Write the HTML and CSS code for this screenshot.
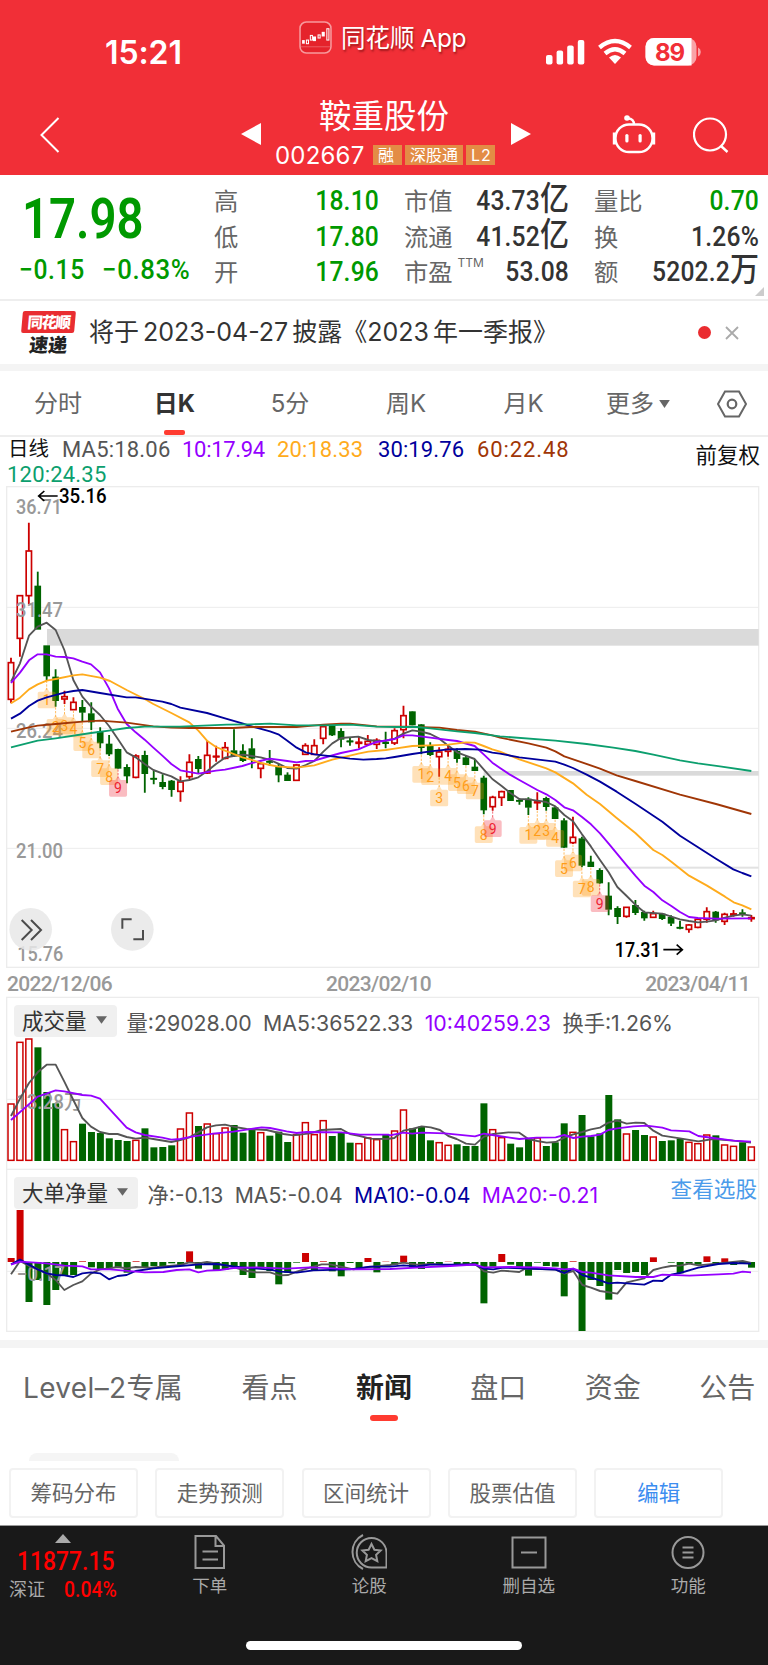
FILE: index.html
```html
<!DOCTYPE html>
<html lang="zh-CN">
<head>
<meta charset="utf-8">
<title>鞍重股份 002667</title>
<link rel="stylesheet" href="styles.css">
</head>
<body>
<header class="top">
  <div class="status">
    <span class="clock">15:21</span>
    <div class="brand">
      <svg class="brand-icon" viewBox="0 0 32 32"><rect x="1" y="1" width="30" height="30" rx="6" fill="#e5232b" stroke="#f79a9d" stroke-width="1.5"/><path d="M2 25h28" stroke="#ee6a6f" stroke-width=".8"/><g fill="#fff"><rect x="3" y="18.500" width="2.600" height="3.500"/><rect x="13.500" y="15" width="3" height="4.500"/><rect x="22" y="10.500" width="3" height="4.500"/></g><g fill="none" stroke="#fff"><rect x="7.200" y="18.500" width="2" height="3.500"/><rect x="11" y="14" width="2" height="4.500"/><rect x="18.500" y="13.500" width="2" height="3"/><rect x="27" y="7.500" width="2" height="11"/></g></svg>
      <span class="brand-name">同花顺<i>App</i></span>
    </div>
    <svg class="signals" viewBox="0 0 156 28"><g fill="#fff"><rect x="0" y="17" width="6.500" height="9.500" rx="2"/><rect x="10.600" y="12.500" width="6.500" height="14" rx="2"/><rect x="21.200" y="7.500" width="6.500" height="19" rx="2"/><rect x="31.800" y="2" width="6.500" height="24.500" rx="2"/></g>
      <g fill="none" stroke="#fff" stroke-width="4.300"><path d="M53.500 9.500Q69 -3.500 84.500 9.500"/><path d="M59 15.500Q69 7 79 15.500"/></g><path d="M63 19.500Q69 14.500 75 19.500L69 26z" fill="#fff"/>
      <rect x="99.500" y="0" width="51" height="27.500" rx="8.500" fill="#f9a3a7"/><path d="M108 0h37.500v27.500H108a8.500 8.500 0 0 1-8.500-8.500V8.500A8.500 8.500 0 0 1 108 0z" fill="#fff"/><path d="M152 9.500a5 5 0 0 1 0 9z" fill="#f9a3a7"/><text class="battery" x="124" y="22.500" text-anchor="middle" textLength="30">89</text></svg>
  </div>
  <nav class="nav">
    <svg class="back" viewBox="0 0 20 36"><path d="M18.500 1L1.500 18 18.500 35" fill="none" stroke="#fff" stroke-width="2"/></svg>
    <svg class="tri" viewBox="0 0 20 22"><path d="M0 11L20 0v22z" fill="#fff"/></svg>
    <div class="stock">
      <h1>鞍重股份</h1>
      <div class="code"><span>002667</span><b>融</b><b>深股通</b><b class="l2">L2</b></div>
    </div>
    <svg class="tri" viewBox="0 0 20 22"><path d="M20 11L0 0v22z" fill="#fff"/></svg>
    <svg class="robot" viewBox="0 0 44 40"><g fill="none" stroke="#fff" stroke-width="2.400"><rect x="3.500" y="10.500" width="37" height="27.500" rx="13.500"/><path d="M22 10.500c0-4-2-6-6-6"/><path d="M2.300 18.500v12M41.700 18.500v12" stroke-width="3"/></g><circle cx="15" cy="4" r="2.800" fill="#fff"/><rect x="13.300" y="20" width="3.200" height="8.500" rx="1.600" fill="#fff"/><rect x="26.500" y="20" width="3.200" height="8.500" rx="1.600" fill="#fff"/></svg>
    <svg class="search" viewBox="0 0 36 36"><circle cx="17" cy="17.500" r="16" fill="none" stroke="#fff" stroke-width="2.200"/><path d="M28 29l6.500 6" stroke="#fff" stroke-width="2.400"/></svg>
  </nav>
</header>

<section class="quote">
  <div class="price">
    <div class="last"><span class="din">17.98</span></div>
    <div class="chg"><span class="din">−0.15</span><span class="din pct">−0.83%</span></div>
  </div>
  <dl class="c1"><dt>高</dt><dd class="down din">18.10</dd><dt>低</dt><dd class="down din">17.80</dd><dt>开</dt><dd class="down din">17.96</dd></dl>
  <dl class="c2"><dt>市值</dt><dd class="din">43.73<em>亿</em></dd><dt>流通</dt><dd class="din">41.52<em>亿</em></dd><dt class="pe">市盈<sup>TTM</sup></dt><dd class="din">53.08</dd></dl>
  <dl class="c3"><dt>量比</dt><dd class="down din">0.70</dd><dt>换</dt><dd class="din">1.26%</dd><dt>额</dt><dd class="din">5202.2<em>万</em></dd></dl>
  <svg class="corner" viewBox="0 0 9 9"><path d="M9 0v9H0z" fill="#ccc"/></svg>
</section>

<section class="notice">
  <div class="logo"><b>同花顺</b><i>速递</i></div>
  <p>将于<span>2023-04-27</span>披露《<span class="year">2023</span>年一季报》</p>
  <span class="dot"></span>
  <svg class="close" viewBox="0 0 14 14"><path d="M1 1l12 12M13 1L1 13" stroke="#aaa" stroke-width="1.800"/></svg>
</section>

<nav class="periods">
  <span>分时</span><span class="on">日K</span><span>5分</span><span>周K</span><span>月K</span><span class="more">更多<svg viewBox="0 0 12 9"><path d="M0 0h12L6 9z" fill="#666"/></svg></span>
  <svg class="hex" viewBox="0 0 30 28"><path d="M8 1.500h14l7 12.500-7 12.500H8L1 14z" fill="none" stroke="#666" stroke-width="2"/><circle cx="15" cy="14" r="4.300" fill="none" stroke="#666" stroke-width="2.200"/></svg>
</nav>

<section class="kline">
  <div class="ma">
    <div class="ma-list"><span class="day">日线</span><span class="m5">MA5:18.06</span><span class="m10">10:17.94</span><span class="m20">20:18.33</span><span class="m30">30:19.76</span><span class="m60">60:22.48</span><span class="m120">120:24.35</span></div>
    <span class="adj">前复权</span>
  </div>
  <svg id="candles" class="plot" width="768" height="490" viewBox="0 0 2304 1470"></svg>
  <div class="dates"><span>2022/12/06</span><span>2023/02/10</span><span>2023/04/11</span></div>
</section>

<section class="panel volume">
  <div class="legend"><button>成交量<svg viewBox="0 0 12 8"><path d="M0 0h12L6 8z" fill="#666"/></svg></button><span>量:29028.00</span><span>MA5:36522.33</span><span class="m10">10:40259.23</span><span>换手:1.26%</span></div>
  <svg id="volume" class="plot" width="768" height="133" viewBox="0 471 2304 399"></svg>
</section>
<section class="panel orders">
  <div class="legend"><button>大单净量<svg viewBox="0 0 12 8"><path d="M0 0h12L6 8z" fill="#666"/></svg></button><span>净:-0.13</span><span>MA5:-0.04</span><span class="m30">MA10:-0.04</span><span class="m10">MA20:-0.21</span><a>查看选股</a></div>
  <svg id="orders" class="plot" width="768" height="123" viewBox="0 132 2304 369"></svg>
</section>

<nav class="news"><span>Level–2专属</span><span>看点</span><span class="on">新闻</span><span>盘口</span><span>资金</span><span>公告</span></nav>
<div class="stub"></div>
<div class="tools"><span>筹码分布</span><span>走势预测</span><span>区间统计</span><span>股票估值</span><span class="edit">编辑</span></div>

<footer>
  <div class="bar">
    <div class="index"><svg viewBox="0 0 16 9"><path d="M8 0l8 9H0z" fill="#aaa"/></svg><strong class="din">11877.15</strong><div><span>深证</span><em class="din">0.04%</em></div></div>
    <div class="act"><svg viewBox="0 0 36 36"><path d="M3.500 2h20.500l8 9.500v22.500H3.500zM23.500 2v10h8.500M10.500 17.500h15.500M10.500 25.500h15.500"/></svg>下单</div>
    <div class="act"><svg viewBox="0 0 36 36"><path d="M20.500 4a15 15 0 0 1 15 15v14.500H20.500a14.700 14.700 0 0 1 0-29.500zM12 1a19 19 0 0 0 0 34"/><path d="M20.500 10l2.900 5.700 6.300.8-4.600 4.400 1.200 6.300-5.800-3-5.800 3 1.200-6.300-4.600-4.400 6.300-.8z"/></svg>论股</div>
    <div class="act"><svg viewBox="0 0 36 36"><rect x="1.500" y="3.500" width="33" height="30"/><path d="M10 18.500h16"/></svg>删自选</div>
    <div class="act"><svg viewBox="0 0 36 36"><circle cx="18" cy="18.500" r="15.500"/><path d="M12.500 13.500h11M12.500 18.500h11M12.500 23.500h11"/></svg>功能</div>
  </div>
  <div class="home"></div>
</footer>
<script src="charts.js"></script>
</body>
</html>
```
FILE: styles.css
```css
* { box-sizing: border-box; }
body { margin: 0; width: 768px; height: 1665px; overflow: hidden; background: #fff; color: #333; font-family: Inter, "Noto Sans CJK SC", sans-serif; }
svg { display: block; flex: none; }
i, em { font-style: normal; }
span, b { white-space: nowrap; }
.din { font-family: Roboto, "Noto Sans CJK SC", sans-serif; font-weight: 500; display: inline-block; transform: scaleX(.88); transform-origin: left; white-space: nowrap; }

.top { height: 175px; background: #f12f37; color: #fff; }
.status { height: 88px; display: flex; padding-left: 105px; }
.clock { width: 194px; padding-top: 32px; font-size: 32px; line-height: 42px; font-weight: 600; letter-spacing: -.1px; }
.brand { width: 247px; display: flex; padding-top: 21px; }
.brand-icon { width: 33px; height: 33px; }
.brand-name { margin-left: 9px; font-size: 24.5px; line-height: 35px; text-shadow: 1px 2px 2px rgba(80, 0, 0, .5); }
.brand-name i { margin-left: 6px; letter-spacing: -.5px; }
.signals { width: 156px; height: 28px; margin-top: 38px; }
.battery { font: 700 24px Inter, sans-serif; fill: #f12f37; }
.nav { height: 87px; display: flex; padding-left: 40px; }
.back { width: 20px; height: 36px; margin: 29px 181px 0 0; }
.tri { width: 20px; height: 22px; margin-top: 35px; }
.stock { width: 250px; padding-left: 14px; }
.stock h1 { margin: 7px 0 0 44px; font-size: 32.5px; line-height: 44px; font-weight: 400; }
.code { display: flex; align-items: center; gap: 3px; height: 24px; margin-top: 4px; }
.code span { width: 95px; font-size: 24px; letter-spacing: .2px; }
.code b { height: 20px; padding: 0 5px; font-size: 16px; line-height: 20px; font-weight: 400; background: #e38c45; width: 29px; letter-spacing: 1px; }
.code b:nth-child(3) { width: 58px; letter-spacing: 0; }
.robot { width: 44px; height: 40px; margin: 26px 0 0 81px; }
.search { width: 36px; height: 36px; margin: 29px 0 0 37px; }

.quote { height: 126px; border-bottom: 2px solid #eee; display: flex; position: relative; color: #333; }
.price { width: 214px; color: #090; }
.last { height: 73px; padding: 13px 0 0 22px; font-size: 55px; line-height: 60px; }
.last .din { font-weight: 600; transform: scaleX(.86); }
.chg { padding-left: 19px; font-size: 28px; line-height: 43px; display: flex; letter-spacing: .7px; }
.chg .pct { margin-left: 8px; transform: scaleX(.92); }
.quote dl { flex: none; margin: 0; display: grid; grid-template-columns: 24px 1fr; grid-template-rows: repeat(3, 35.6px); padding-top: 8px; line-height: 35.6px; }
.quote dt { font-size: 24.300px; color: #666; white-space: nowrap; padding-top: 1px; }
.quote dd { margin: 0; text-align: right; font-size: 28px; transform-origin: right; letter-spacing: .2px; }
.quote dd em { font-size: 33px; font-weight: 500; line-height: 30px; letter-spacing: 0; }
.quote .down { color: #090; }
.c1 { width: 165px; }
.c2 { width: 165px; margin-left: 25px !important; }
.c3 { width: 165px; margin-left: 25px !important; }
.pe { width: 60px; }
.pe sup { position: absolute; margin-left: 5px; font-size: 12px; line-height: 16px; }
.corner { position: absolute; right: 4px; bottom: 3px; width: 9px; height: 9px; }

.notice { height: 70px; border-bottom: 7px solid #f4f4f4; display: flex; align-items: center; padding-left: 22px; }
.logo { width: 53px; margin-right: 14px; text-align: center; font-family: "Noto Sans CJK SC", sans-serif; }
.logo b { display: block; height: 22px; font-size: 15.500px; line-height: 21px; font-weight: 900; letter-spacing: -1.5px; color: #fff; background: #e92d31; border-radius: 2px; transform: skewX(-5deg); }
.logo i { display: block; height: 21px; font-size: 19px; line-height: 21px; font-weight: 900; color: #222; transform: skewX(-6deg); }
.notice p { width: 609px; margin: 0; padding-bottom: 2px; font-size: 25px; line-height: 36px; white-space: nowrap; color: #333; }
.notice p span { margin: 0 4px; letter-spacing: 0; }
.notice p .year { margin-left: 0; }
.dot { width: 13px; height: 13px; border-radius: 50%; background: #ea2c30; }
.close { width: 14px; height: 14px; margin-left: 14px; }

.periods { height: 66px; border-bottom: 2px solid #eee; display: grid; grid-template-columns: 116px 117px 114px 118px 117px 112px 30px; align-items: center; justify-items: center; padding-top: 1px; font-size: 24px; line-height: 64px; color: #666; }
.periods span { position: relative; }
.periods .on { font-weight: 700; color: #333; }
.periods .on::after { content: ""; position: absolute; left: 50%; margin-left: -10px; bottom: 1px; width: 21px; height: 5px; border-radius: 2px; background: #ff3b30; }
.more { display: flex; align-items: center; gap: 5px; }
.more svg { width: 11px; height: 8px; }
.hex { width: 30px; height: 28px; justify-self: start; margin-left: 23px; }

.ma { height: 43px; display: flex; justify-content: space-between; font-family: Roboto, "Noto Sans CJK SC", sans-serif; font-size: 22px; line-height: 25px; }
.ma-list { display: grid; grid-template-columns: 55px 120px 95px 101px 99px 110px; grid-template-rows: 25px 25px; padding-left: 7px; color: #555; }
.day, .adj { font-size: 20.500px; color: #111; }
.day { padding-left: 1px; }
.adj { font-size: 21.500px; line-height: 38px; padding-right: 8px; }
.m120 { grid-column: 1 / 3; color: #0c9f6e; letter-spacing: .2px; }
.m5 { letter-spacing: .2px; }
.m10 { color: #9500ff; }
.m20 { color: #ffab1c; }
.m30 { color: #00009c; }
.m60 { color: #a03606; }
.ma-list .m20, .ma-list .m30 { letter-spacing: .1px; }
.ma-list .m60 { letter-spacing: .9px; }
.ma-list .m10 { letter-spacing: -.3px; }
.plot { overflow: visible; }
.plot text { font-family: Roboto, "Noto Sans CJK SC", sans-serif; }
.dates { height: 27px; display: flex; justify-content: space-between; padding: 0 18px 0 7px; font: 500 21px/28px Roboto, sans-serif; letter-spacing: -.7px; color: #999; }

.panel { margin: 0; }
.volume { height: 172px; }
.orders { height: 171px; }
.legend { height: 40px; display: flex; align-items: center; padding: 7px 0 0 14px; font-size: 21.300px; line-height: 30px; color: #555; }
.legend button { width: 103px; height: 32px; border: 0; border-radius: 4px; padding: 0 0 2px 8px; display: flex; align-items: center; gap: 9px; background: #f0f0f0; font: 21.500px/30px "Noto Sans CJK SC", sans-serif; color: #333; white-space: nowrap; }
.legend button svg { width: 11px; height: 8px; }
.legend span { margin-left: 11.400px; padding-top: 5px; }
.legend button + span { margin-left: 9.500px; }
.legend .m10 { color: #9500ff; }
.legend .m30 { color: #00009c; }
.orders button { width: 124px; }
.orders .legend { font-size: 21.200px; }
.orders a { margin: -8px 11px 0 auto; font-size: 21.600px; color: #4b9bea; }

.news { height: 113px; border-top: 8px solid #f4f4f4; display: flex; align-items: flex-start; padding-left: 23px; font-size: 28px; line-height: 80px; color: #666; }
.news span { position: relative; margin-right: 58.400px; }
.news span:first-child { letter-spacing: .35px; }
.news .on { font-weight: 700; color: #222; }
.news .on::after { content: ""; position: absolute; left: 14px; top: 67px; width: 28px; height: 6px; border-radius: 3px; background: #ff3b30; }
.stub { height: 8px; width: 150px; margin-left: 29px; border-radius: 8px 8px 0 0; background: #f5f5f5; }
.tools { display: flex; gap: 17.300px; padding: 7px 9px; height: 64px; }
.tools span { width: 129px; height: 50px; border: 2px solid #f2f2f2; border-radius: 4px; text-align: center; font-size: 21.500px; line-height: 46px; color: #666; }
.tools .edit { color: #3c8df0; }

footer { height: 140px; background: #191919; border-top: 1px solid #999; color: #aaa; }
.bar { display: flex; height: 115px; padding-top: 8px; }
.index { width: 130px; padding-left: 9px; }
.index svg { width: 16px; height: 9px; margin-left: 46px; }
.index strong { display: block; margin: 4px 0 0 8px; font-size: 26px; line-height: 28px; font-weight: 500; color: #f00; }
.index div { display: flex; gap: 19px; font-size: 18px; line-height: 30px; }
.index em { font-size: 22px; color: #f00; }
.act { width: 159.500px; display: flex; flex-direction: column; align-items: center; font-size: 17.500px; line-height: 26px; }
.act svg { width: 36px; height: 36px; margin-bottom: 3px; fill: none; stroke: #999; stroke-width: 2; }
.home { width: 276px; height: 9px; margin: 0 auto; border-radius: 5px; background: #fff; }
```
FILE: charts.js
```js
// Plots are drawn in units of one third of a pixel.
var FIRST = 33, STEP = 26.76;
var RED = '#cc0000', GREEN = '#006400';
var COLORS = { ma5: '#555555', ma10: '#9500ff', ma20: '#ffab1c', ma30: '#00009c', ma60: '#a03606', ma120: '#0c9f6e' };

function xAt(i) { return FIRST + STEP * i; }
function rect(x, y, w, h, attrs) { return '<rect x="' + x + '" y="' + y + '" width="' + w + '" height="' + h + '" ' + attrs + '/>'; }
function hline(y) { return '<path d="M20 ' + y + 'H2276" stroke="#ececec" stroke-width="3"/>'; }
function label(x, y, w, s, color, weight, size) {
  return '<text x="' + x + '" y="' + y + '" textLength="' + w + '" lengthAdjust="spacingAndGlyphs" fill="' + color + '" font-weight="' + weight + '" font-size="' + (size || 62) + '">' + s + '</text>';
}
// parts: [dx, dy, "x,y x,y ..."] segments joined into one polyline
function line(color, parts) {
  var pts = [];
  parts.forEach(function (p) {
    p[2].split(' ').forEach(function (s) {
      var c = s.split(',');
      pts.push((+c[0] + p[0]) + ',' + (+c[1] + p[1]));
    });
  });
  return '<polyline points="' + pts.join(' ') + '" fill="none" stroke="' + color + '" stroke-width="5.6" stroke-linejoin="round"/>';
}

// Each candle: colour high bodyTop bodyBottom low
function candleRows(dy, text) {
  return text.split('|').map(function (r) {
    var a = r.split(' ');
    return { up: a[0] === 'r', v: a.slice(1).map(function (n) { return +n + dy; }) };
  });
}
var candles = candleRows(0, 'r 533 548 658 670|r 345 347 475 530|r 128 213 347 372|g 275 318 448 448|g 497 497 588 600|g 568 591 662 680|r 632 650 657 672|r 652 667 689 690|g 660 682 697 725|g 667 701 726 750|g 742 755 789 805|g 765 792 822 828|g 806 808 865 866|g 853 862 888 910|r 823 828 892 895|g 812 826 881 938|g 872 895 898 913|g 883 907 920 928|g 900 903 929 950|r 889 906 934 965|r 823 847 890 898|g 828 838 866 882|r 782 826 879 882|r 797 829 830 845|r 786 803 835 838|g 748 812 828 830|g 793 813 842 846')
  .concat(candleRows(540, 'g 235 266 295 325|r 305 311 325 355|g 270 304 307 318|g 312 320 345 367|g 337 345 362 362|r 313 315 361 362|r 250 257 283 285|r 238 257 283 285|r 198 200 235 253|g 195 197 225 228|g 205 214 238 262|g 232 243 246 257|r 230 247 250 265|r 225 244 253 257|r 235 241 253 267|g 215 246 251 265|r 205 212 249 255|r 137 167 209 235|g 154 155 195 196|g 192 194 263 283|g 247 258 284 288|r 262 276 290 350|r 255 268 274 290|g 265 274 296 308|g 288 293 314 316|g 297 321 332 333|g 347 354 450 463|r 407 412 440 452'))
  .concat(candleRows(600, 'r 332 335 352 378|g 331 331 362 362|g 355 361 364 374|g 352 357 382 405|r 337 366 368 390|g 350 355 380 392|g 378 383 416 417|g 415 422 502 504|r 410 472 488 492|g 470 476 556 562|g 527 546 560 561|g 565 571 609 611|g 607 648 688 706|g 679 685 710 732|r 681 682 709 713|g 660 676 698 705|g 692 697 714 722|r 692 701 712 714|g 700 702 716 720|g 706 712 730 738|g 722 742 745 748|r 732 735 748 758|r 716 718 742 745|r 682 695 718 728|g 693 696 720 728|r 698 703 724 735|r 690 702 705 710|g 688 698 702 710|r 705 713 716 725'));

function drawCandles() {
  var s = rect(20, 20, 2256, 1442, 'fill="none" stroke="#ececec" stroke-width="4"');
  s += hline(382) + hline(745) + hline(1105);
  s += rect(141, 447, 2135, 50, 'fill="#dadada"') + rect(1451, 873, 825, 14, 'fill="#dadada"') + rect(1800, 1160, 476, 6, 'fill="#e2e2e2"');
  candles.forEach(function (c, i) {
    var x = xAt(i), v = c.v, col = c.up ? RED : GREEN;
    s += '<path d="M' + x + ' ' + v[0] + 'V' + v[1] + 'M' + x + ' ' + v[2] + 'V' + v[3] + '" stroke="' + col + '" stroke-width="5.5"/>';
    s += c.up ? rect(x - 8, v[1], 16, Math.max(1, v[2] - v[1]), 'fill="#fff" stroke="' + col + '" stroke-width="5"')
              : rect(x - 10, v[1] - 1, 20, v[2] - v[1] + 2, 'fill="' + col + '"');
    // A candle that opens and closes at one price is a cross
    if (v[2] - v[1] < 4) s += '<path d="M' + (x - 10) + ' ' + (v[1] + 1) + 'h20" stroke="' + col + '" stroke-width="5"/>';
  });
  s += label(48, 101, 138, '36.71', '#999', 500) + label(48, 410, 141, '31.47', '#999', 500) + label(48, 773, 141, '26.24', '#999', 500) + label(48, 1134, 141, '21.00', '#999', 500);
  // Sequence markers under the candles: [first candle, centre heights]
  [[4, [660, 742, 737, 747, 788, 810, 866, 890, 925]],
   [46, [883, 890, 954, 889, 908, 917, 933, 1064, 1046]],
   [58, [1066, 1054, 1054, 1075, 1166, 1149, 1227, 1222, 1271]]].forEach(function (run) {
    run[1].forEach(function (y, k) {
      var x = xAt(run[0] + k), last = k === 8;
      var ink = last ? '#ee2233' : '#ff9d18';
      s += '<path d="M' + x + ' ' + (candles[run[0] + k].v[3] + 2) + 'V' + (y - 30) + '" stroke="' + ink + '" stroke-width="2" stroke-dasharray="7 4"/>';
      s += '<path d="M' + (x - 22) + ' ' + (y - 25) + 'h14l8 -13 8 13h14q5 0 5 5v40q0 5 -5 5h-44q-5 0 -5 -5v-40q0 -5 5 -5z" fill="' + ink + '" fill-opacity=".3"/>';
      s += '<text x="' + x + '" y="' + (y + 15) + '" text-anchor="middle" font-size="42" fill="' + ink + '">' + (k + 1) + '</text>';
    });
  });
  s += line(COLORS.ma5, [[0, 0, '33,605 60,550 87,467 113,440 140,428 167,450 193,510 220,600 247,650 273,680 300,705 327,738 353,776 380,817 407,832 434,852 460,870 487,880 514,889 541,904 568,900 595,892 621,874 648,852 675,833 700,828 730,824'], [750, 540, '5,288 32,292 60,300 85,311 112,324 140,326 167,315 193,303 220,275 247,250 273,234 325,230 355,240 380,243 407,242 434,236 460,221 487,211 514,215 541,222 568,236 595,257 621,277 647,287 674,297 701,328 727,357'], [1500, 600, '5,318 30,338 58,357 85,358 112,362 139,366 166,379 193,405 219,424 246,463 273,500 300,540 326,577 352,621 380,648 406,674 433,697 487,701 514,710 540,718 567,723 594,727 621,725 648,721 675,713 701,707 727,703 754,707']]);
  s += line(COLORS.ma10, [[0, 0, '33,609 60,578 87,541 113,523 140,523 167,530 193,531 220,535 247,545 273,553 300,577 327,625 353,686 380,732 407,757 434,779 460,803 487,827 514,852 541,871 595,881 648,872 675,869 727,858'], [750, 540, '0,311 30,303 60,296 112,303 140,307 167,303 193,302 230,291 273,279 325,268 360,253 380,246 434,237 460,226 487,226 541,233 595,240 621,243 674,258 701,283 727,308'], [1500, 600, '0,264 30,284 58,300 112,330 139,343 166,360 193,382 219,391 246,411 273,433 300,460 326,491 380,556 406,587 433,617 460,636 487,661 514,678 540,696 567,711 594,714 648,716 754,715']]);
  s += line(COLORS.ma20, [[0, 0, '33,670 60,653 87,628 113,613 140,602 167,597 220,586 247,583 300,593 330,603 380,630 434,657 460,672 514,699 568,727 595,752 621,782 648,801 675,812 727,832'], [750, 540, '0,298 30,308 60,315 85,320 140,323 193,316 247,299 300,287 325,281 355,275 407,270 434,266 487,258 541,256 595,254 647,247 674,248 701,258 727,268'], [1500, 600, '0,215 58,238 139,265 166,277 219,310 260,344 300,372 350,414 406,459 460,510 487,525 514,545 567,587 621,617 675,650 701,667 727,676 754,688']]);
  s += line(COLORS.ma30, [[0, 0, '33,716 60,701 87,678 113,662 140,652 193,638 220,633 247,630 300,639 380,652 407,652 487,665 514,672 541,683 621,699 675,715 727,730'], [750, 540, '0,198 30,206 60,214 85,223 112,242 140,263 167,277 193,283 247,289 300,296 340,299 380,297 407,295 434,291 487,282 541,274 595,268 647,267 690,269 727,278'], [1500, 600, '0,221 58,232 166,245 193,254 219,264 260,284 300,305 350,335 406,371 460,407 487,425 540,467 594,502 648,536 700,568 727,579 754,589']]);
  s += line(COLORS.ma60, [[0, 0, '33,755 87,742 113,737 167,732 247,725 300,722 380,728 460,739 514,743 568,744 700,744'], [750, 540, '0,201 140,201 220,194 273,191 300,191 380,199 470,200 541,202 568,203 621,210 675,215 727,226'], [1500, 600, '0,173 85,190 139,203 166,214 193,229 246,247 300,266 350,286 406,303 540,344 648,372 754,402']]);
  s += line(COLORS.ma120, [[0, 0, '33,802 113,782 167,775 273,759 327,752 380,744 434,740 540,740 680,734'], [750, 540, '0,193 60,191 140,196 220,196 300,194 380,200 440,201 500,201 541,205 621,214 675,219 727,226'], [1500, 600, '0,169 166,182 260,192 340,203 406,213 460,224 540,241 594,250 660,259 754,273']]);
  s += label(177, 69, 143, '35.16', '#000', 500) + '<path d="M173 48H116M133 33L116 48L133 63" fill="none" stroke="#000" stroke-width="5"/>';
  s += label(1844, 1431, 138, '17.31', '#000', 500) + '<path d="M1990 1409H2047M2030 1394L2047 1409L2030 1424" fill="none" stroke="#000" stroke-width="5"/>';
  s += label(52, 1443, 138, '15.76', '#999', 500);
  s += '<circle cx="92" cy="1348" r="64" fill="#e8e8e8" fill-opacity=".85"/><circle cx="397" cy="1348" r="64" fill="#ebebeb"/>';
  s += '<path d="M65 1320L95 1350L65 1380M93 1320L123 1350L93 1380M367 1346V1318H395M429 1350V1378H400" fill="none" stroke="#4c4c4c" stroke-width="6"/>';
  document.getElementById('candles').innerHTML = s;
}

var volumes = 'r671 r486 r476 g502 g636 g670 r748 r784 g731 g756 g759 g775 g780 g783 r780 g745 g802 g801 g796 r746 r698 g738 r731 r760 r743 g735 g758 g748 r757 g767 g755 g786 r763 r727 r763 r721 g768 g758 g788 r790 r773 r778 g765 r752 r689 g745 g740 g781 r787 r795 g793 g798 g798 g670 r748 r772 g791 g802 g775 r773 g798 g787 g730 r756 g705 g769 g760 g645 g718 r761 g750 g765 r770 g783 g781 g776 r786 r790 r764 g766 r794 r798 g787 r800'.split(' ');
function drawVolume() {
  var s = '<path d="M20 868V352H2276V868" fill="none" stroke="#ececec" stroke-width="4"/>' + hline(658);
  volumes.forEach(function (t, i) {
    var up = t[0] === 'r', y = +t.slice(1), x = xAt(i);
    s += up ? rect(x - 9, y + 1, 18, 840 - y, 'fill="#fff" stroke="' + RED + '" stroke-width="4.5"') : rect(x - 10, y, 21, 843 - y, 'fill="' + GREEN + '"');
  });
  s += label(48, 687, 200, '13.28万', '#999', 500);
  s += line(COLORS.ma5, [[0, 0, '33,708 60,656 87,609 113,577 140,554 167,554 193,605 220,660 247,714 273,740 300,756 327,762 353,762 380,771 407,776 434,773 460,777 514,786 541,780 568,772 595,757 621,742 648,736 675,734 700,740 740,747 800,750 850,762 880,766 930,760 965,750 1023,747 1050,762 1080,768 1110,776 1160,777'], [1170, 270, '13,504 40,482 67,477 95,469 122,472 150,480 175,498 200,507 228,521 255,524 282,500 310,492 355,487 388,488 415,507 442,513 470,518 497,516 523,503 550,493 577,486 603,478 630,473 655,458 682,452 710,461 737,458 763,459 790,482 817,497 870,505 925,514 970,507 1030,512 1083,518']]);
  s += line(COLORS.ma10, [[0, 0, '33,720 113,650 167,631 193,634 247,645 273,647 300,656 380,743 407,757 434,765 487,773 514,779 541,777 580,769 640,761 700,755 740,749 785,742 810,744 860,754 890,759 920,756 1023,757 1080,764 1165,764'], [1170, 270, '0,496 40,488 67,491 95,488 165,490 255,499 282,491 325,498 388,507 440,503 497,502 523,495 550,504 577,500 603,498 630,494 655,480 682,475 730,469 770,467 817,473 843,481 898,484 925,498 970,504 1030,512 1083,515']]);
  document.getElementById('volume').innerHTML = s;
}

var orders = 'r279 r135 g411 g345 g420 g375 g332 g330 r289 g307 g312 g310 g307 g323 r289 g307 g303 g305 g295 g300 r259 g311 g298 g318 g314 g305 g330 g339 g310 g318 g358 g323 g293 r264 g318 r289 g319 g334 g294 g309 r279 g322 r290 g299 r272 g307 g312 g300 g299 r290 g297 g299 g298 g415 g305 r267 g299 g308 g332 g293 g303 g305 g394 r289 g498 g345 g363 g404 g315 g324 g321 g330 r277 g291 g293 g325 g296 g299 r274 g295 r280 g300 g296 g308'.split(' ');
function drawOrders() {
  var s = rect(20, 13, 2256, 486, 'fill="none" stroke="#ececec" stroke-width="4"') + hline(319);
  orders.forEach(function (t, i) {
    var y = +t.slice(1), x = xAt(i);
    s += t[0] === 'r' ? rect(x - 10, y, 21, 291 - y, 'fill="' + RED + '"') : rect(x - 10, 291, 21, y - 291, 'fill="' + GREEN + '"');
  });
  s += label(50, 347, 145, '−0.17', '#999', 500);
  s += line(COLORS.ma5, [[0, 0, '33,328 60,288 87,303 113,312 140,325 167,345 193,375 220,360 247,349 273,326 300,313 327,310 353,306 380,310 407,306 450,308 540,300 568,292 595,295 621,291 648,295 700,306 740,318 770,322 810,322 838,331 865,330 890,320 940,305 965,298 990,298 1020,304 1060,313 1110,306'], [1170, -585, '0,885 40,878 80,884 130,882 170,886 255,882 282,904 310,908 335,902 388,906 405,896 497,899 523,911 550,903 577,945 603,953 630,963 682,971 710,937 763,925 790,900 817,893 843,888 870,887 898,881 925,886 985,880 1058,873 1083,879']]);
  s += line(COLORS.ma30, [[0, 0, '33,298 60,284 87,299 113,313 140,325 167,330 193,331 220,336 247,325 273,322 300,325 327,343 353,333 380,330 407,318 460,310 540,303 600,298 650,297 700,304 760,310 810,314 840,320 890,323 940,316 1050,313 1110,305'], [1170, -585, '0,890 40,886 80,889 120,884 180,884 255,883 282,896 310,898 340,893 415,896 497,899 523,909 550,896 577,915 630,931 655,940 682,938 763,944 790,932 817,933 843,914 870,909 925,893 985,882 1030,879 1083,881']]);
  s += line(COLORS.ma10, [[0, 0, '33,299 60,290 140,295 193,302 247,304 273,313 330,313 434,322 490,321 530,315 568,313 595,322 621,317 660,315 700,309 770,307 860,311 930,307 1000,310 1060,313'], [1170, -585, '0,897 80,893 180,888 255,884 282,892 360,891 440,892 497,895 523,898 550,896 577,906 603,908 655,916 737,921 790,921 817,914 898,917 985,913 1030,911 1058,905 1083,907']]);
  document.getElementById('orders').innerHTML = s;
}

drawCandles();
drawVolume();
drawOrders();
```
